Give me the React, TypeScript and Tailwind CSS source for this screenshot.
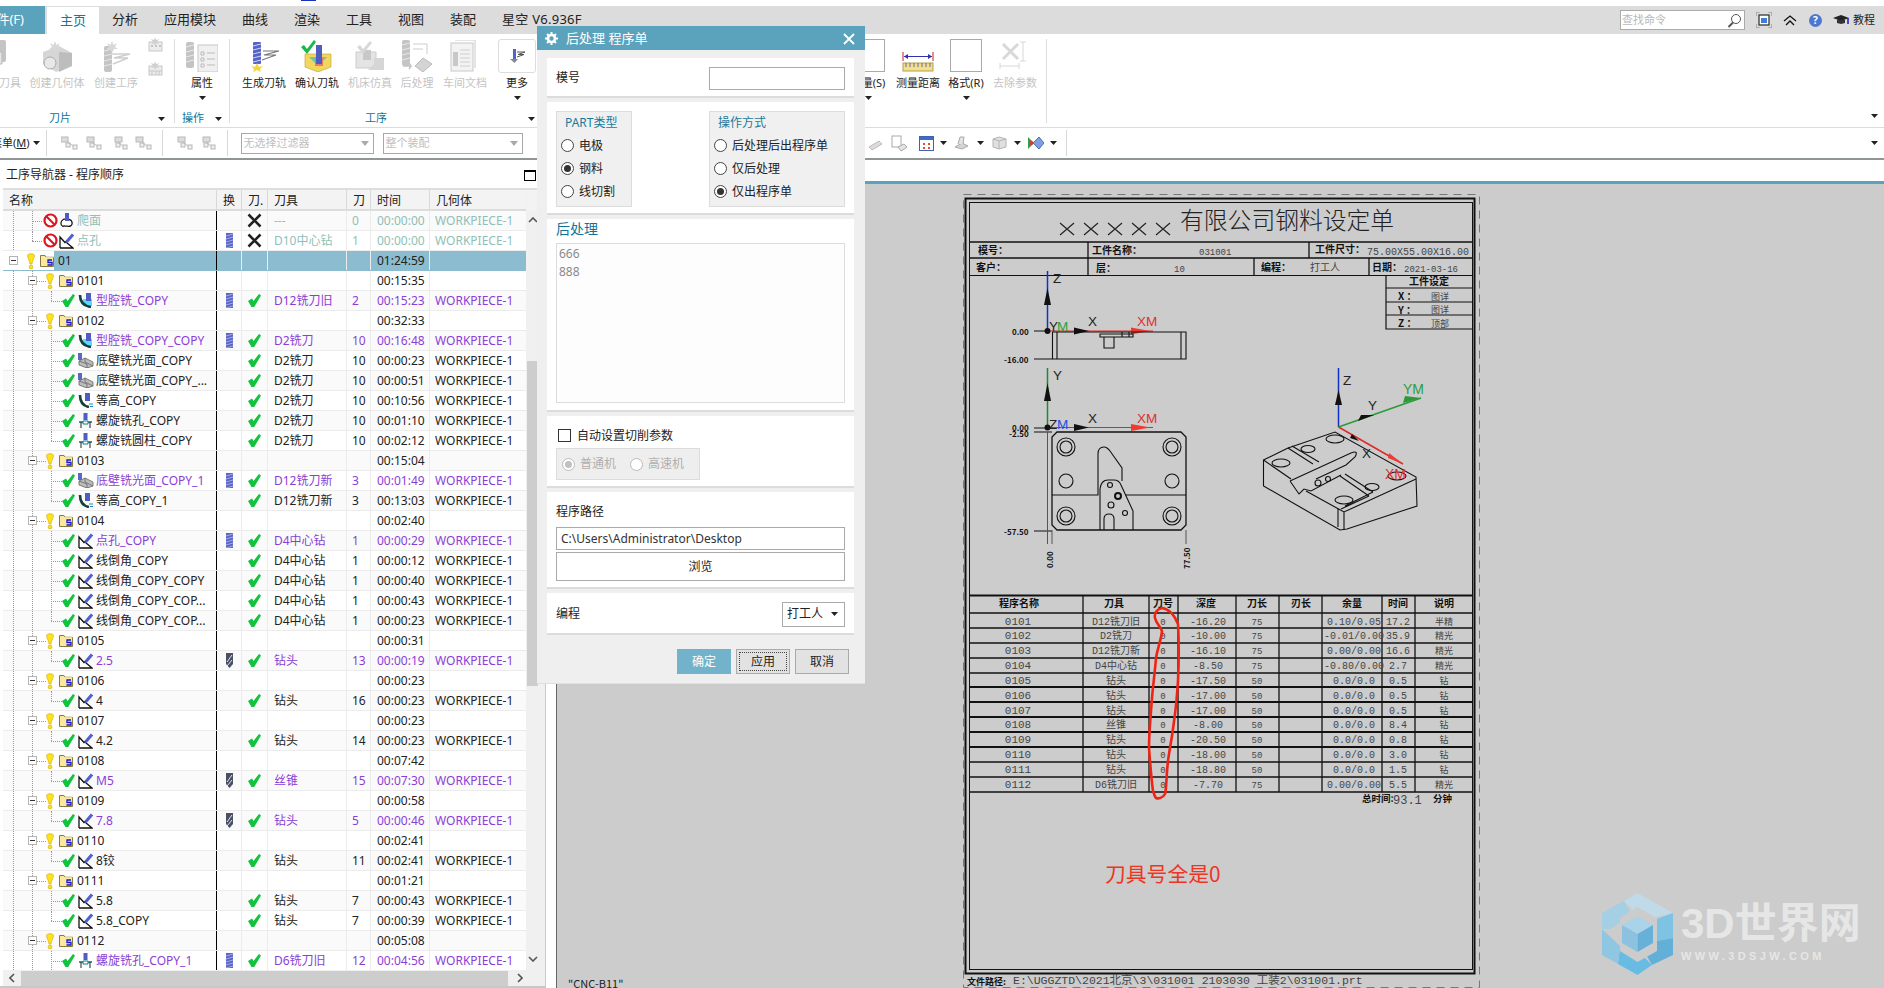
import React from "react";

// ---------- small tree icons ----------
const Bulb = () => (
  <svg width="8" height="16" viewBox="0 0 8 16" className="shrink-0">
    <path d="M.5 2.5 C.5 .2 7.500 .2 7.500 2.500 C7.500 5 5.200 8 5 11 H3 C2.800 8 .5 5 .5 2.500z" fill="#ffe21a" stroke="#c9a800" strokeWidth=".6" />
    <circle cx="4" cy="14" r="1.900" fill="#ffe21a" stroke="#c9a800" strokeWidth=".6" />
  </svg>
);

const Folder = () => (
  <svg width="14" height="13" viewBox="0 0 14 13" className="shrink-0">
    <path d="M.5 12.5V1.5H5L6 3H13.5V12.5z" fill="#fbe9a0" stroke="#8a7a3a" />
    <path d="M6 3H13.5" stroke="#fff" />
    <path d="M12 6H8V8.5H12V11H7.5" stroke="#1616d8" strokeWidth="1.3" fill="none" />
  </svg>
);

const Check = () => (
  <svg width="13" height="13" viewBox="0 0 13 13" className="shrink-0">
    <path d="M0 7 L4 4.500 L5.500 7 L11 0 L13 1.500 L6.200 13 L3.500 13z" fill="#11c43d" />
  </svg>
);

const NoSign = () => (
  <svg width="15" height="15" viewBox="0 0 15 15" className="shrink-0">
    <circle cx="7.5" cy="7.5" r="6" fill="#fff" stroke="#e0141e" strokeWidth="2.2" />
    <path d="M3.5 3.5L11.5 11.5" stroke="#e0141e" strokeWidth="2.2" />
  </svg>
);

const Cross = () => (
  <svg width="15" height="15" viewBox="0 0 15 15">
    <path d="M1.5 1.5L13.5 13.5M13.5 1.5L1.5 13.5" stroke="#222" strokeWidth="2.6" />
  </svg>
);

const OpPath = () => (
  <svg width="15" height="16" viewBox="0 0 15 16" className="shrink-0">
    <path d="M1 15V4L6 9.500L8.500 7.500M1 15H14L7.500 9.500" stroke="#111" strokeWidth="1.300" fill="#fff" />
    <path d="M7.500 9L14 1.500" stroke="#5060d0" strokeWidth="3" />
  </svg>
);

const OpCavity = () => (
  <svg width="15" height="15" viewBox="0 0 15 15" className="shrink-0">
    <rect x="5" y="6" width="9" height="7" fill="#52dcff" />
    <path d="M2 2C2 9 5 13 13 14" stroke="#13403f" strokeWidth="2.6" fill="none" />
    <rect x="8" y="0" width="5" height="8" fill="#4f5cc4" />
  </svg>
);

const OpFloor = () => (
  <svg width="16" height="15" viewBox="0 0 16 15" className="shrink-0">
    <path d="M1 8L7 5L15 9V13L9 15L1 12z" fill="#bdbdbd" stroke="#666" strokeWidth=".8" />
    <path d="M7 5V9L15 13M1 8L9 11V15" stroke="#666" strokeWidth=".8" fill="none" />
    <rect x="0" y="0" width="4" height="7" fill="#5a66c8" />
  </svg>
);

const OpContour = () => (
  <svg width="15" height="15" viewBox="0 0 15 15" className="shrink-0">
    <path d="M2 2C2 9 5 13 11 14" stroke="#12403f" strokeWidth="2.6" fill="none" />
    <rect x="7" y="0" width="5" height="8" fill="#4f5cc4" />
    <path d="M11 11H15M12 13.500H15" stroke="#1888c8" />
  </svg>
);

const OpHelix = () => (
  <svg width="15" height="15" viewBox="0 0 15 15" className="shrink-0">
    <rect x="5.500" y="0" width="4" height="7" fill="#4f5cc4" />
    <path d="M1 9H14" stroke="#0d7f88" strokeWidth="1.6" />
    <path d="M3 9V15M12 9V15" stroke="#222" />
    <path d="M5 8H10V11H5z" fill="#fff" stroke="#0d7f88" />
  </svg>
);

const OpFace = () => (
  <svg width="15" height="15" viewBox="0 0 15 15" className="shrink-0">
    <path d="M5 6C1 8 1 12 4 13.500C5 12 7 14 8 13C10 14 14 13 13 9C12 6 9 6 5 6z" fill="#fff" stroke="#111" strokeWidth="1.2" />
    <rect x="6" y="0" width="4" height="8" fill="#4f5cc4" />
  </svg>
);

const ToolMill = () => (
  <svg width="7" height="15" viewBox="0 0 7 15">
    <rect width="7" height="15" fill="#5964c6" />
    <path d="M0 3L7 1M0 6L7 4M0 9L7 7M0 12L7 10M0 15L7 13" stroke="#b9c0ee" strokeWidth=".8" />
  </svg>
);

const ToolDrill = () => (
  <svg width="7" height="15" viewBox="0 0 7 15">
    <path d="M0 0H7V11L3.500 15L0 11z" fill="#4a4f63" />
    <path d="M1 9L6 2M1 13L6 7" stroke="#dfe2ee" />
  </svg>
);

const opIcons = { path: OpPath, cavity: OpCavity, floor: OpFloor, contour: OpContour, helix: OpHelix, face: OpFace };
type OpKind = keyof typeof opIcons;

type Row = {
  lv: "top" | "root" | "grp" | "op";
  name: string;
  time: string;
  op?: OpKind;
  tool?: string;
  n?: string;
  purple?: boolean;
  icon?: "mill" | "drill";
  end?: boolean;
};

const op = (name: string, o: OpKind, tool: string, n: string, time: string, extra: Partial<Row> = {}): Row => ({
  lv: "op", name, op: o, tool, n, time, ...extra,
});
const grp = (name: string, time: string): Row => ({ lv: "grp", name, time });
const P = { purple: true, icon: "mill" as const };
const PD = { purple: true, icon: "drill" as const };

const rows: Row[] = [
  { lv: "top", name: "爬面", time: "00:00:00", op: "face", tool: "---", n: "0" },
  { lv: "top", name: "点孔", time: "00:00:00", op: "path", tool: "D10中心钻", n: "1", icon: "mill", end: true },
  { lv: "root", name: "01", time: "01:24:59" },
  grp("0101", "00:15:35"),
  op("型腔铣_COPY", "cavity", "D12铣刀旧", "2", "00:15:23", { ...P, end: true }),
  grp("0102", "00:32:33"),
  op("型腔铣_COPY_COPY", "cavity", "D2铣刀", "10", "00:16:48", P),
  op("底壁铣光面_COPY", "floor", "D2铣刀", "10", "00:00:23"),
  op("底壁铣光面_COPY_...", "floor", "D2铣刀", "10", "00:00:51"),
  op("等高_COPY", "contour", "D2铣刀", "10", "00:10:56"),
  op("螺旋铣孔_COPY", "helix", "D2铣刀", "10", "00:01:10"),
  op("螺旋铣圆柱_COPY", "helix", "D2铣刀", "10", "00:02:12", { end: true }),
  grp("0103", "00:15:04"),
  op("底壁铣光面_COPY_1", "floor", "D12铣刀新", "3", "00:01:49", P),
  op("等高_COPY_1", "contour", "D12铣刀新", "3", "00:13:03", { end: true }),
  grp("0104", "00:02:40"),
  op("点孔_COPY", "path", "D4中心钻", "1", "00:00:29", P),
  op("线倒角_COPY", "path", "D4中心钻", "1", "00:00:12"),
  op("线倒角_COPY_COPY", "path", "D4中心钻", "1", "00:00:40"),
  op("线倒角_COPY_COP...", "path", "D4中心钻", "1", "00:00:43"),
  op("线倒角_COPY_COP...", "path", "D4中心钻", "1", "00:00:23", { end: true }),
  grp("0105", "00:00:31"),
  op("2.5", "path", "钻头", "13", "00:00:19", { ...PD, end: true }),
  grp("0106", "00:00:23"),
  op("4", "path", "钻头", "16", "00:00:23", { end: true }),
  grp("0107", "00:00:23"),
  op("4.2", "path", "钻头", "14", "00:00:23", { end: true }),
  grp("0108", "00:07:42"),
  op("M5", "path", "丝锥", "15", "00:07:30", { ...PD, end: true }),
  grp("0109", "00:00:58"),
  op("7.8", "path", "钻头", "5", "00:00:46", { ...PD, end: true }),
  grp("0110", "00:02:41"),
  op("8铰", "path", "钻头", "11", "00:02:41", { end: true }),
  grp("0111", "00:01:21"),
  op("5.8", "path", "钻头", "7", "00:00:43"),
  op("5.8_COPY", "path", "钻头", "7", "00:00:39", { end: true }),
  grp("0112", "00:05:08"),
  op("螺旋铣孔_COPY_1", "helix", "D6铣刀旧", "12", "00:04:56", P),
];

const Minus = () => (
  <span className="shrink-0 w-[9px] h-[9px] border border-[#b4b4b4] bg-white flex items-center justify-center">
    <span className="w-[5px] h-px bg-[#333]" />
  </span>
);

function TreeName({ r }: { r: Row }) {
  const OpIcon = r.op ? opIcons[r.op] : null;
  const color = r.lv === "top" ? "text-[#8fbfb6]" : r.purple ? "text-[#8a3ed6]" : "text-[#222]";
  return (
    <div className="relative w-[214px] h-full flex items-center border-r border-black shrink-0">
      <span className="absolute left-[10px] top-0 h-full border-l border-dotted border-[#999]" />
      {r.lv !== "root" && (
        <span className={`absolute left-[29px] top-0 border-l border-dotted border-[#999] ${r.lv === "top" && r.end ? "h-[10px]" : "h-full"}`} />
      )}
      {r.lv === "op" && (
        <span className={`absolute left-[48px] top-0 border-l border-dotted border-[#999] ${r.end ? "h-[10px]" : "h-full"}`} />
      )}
      {r.lv === "top" && <span className="absolute left-[29px] top-[10px] w-[10px] border-t border-dotted border-[#999]" />}
      {r.lv === "op" && <span className="absolute left-[48px] top-[10px] w-[11px] border-t border-dotted border-[#999]" />}
      {r.lv === "grp" && <span className="absolute left-[34px] top-[10px] w-[9px] border-t border-dotted border-[#999]" />}
      {r.lv === "root" && (
        <div className="relative flex items-center h-full w-full">
          <div className="w-[51px] h-full bg-white shrink-0 flex items-center pl-[6px]">
            <Minus />
            <span className="ml-[9px]"><Bulb /></span>
            <span className="ml-[5px]"><Folder /></span>
          </div>
          <span className="pl-[4px] text-[#222]">{r.name}</span>
        </div>
      )}
      {r.lv === "grp" && (
        <div className="relative flex items-center h-full pl-[25px]">
          <Minus />
          <span className="ml-[9px]"><Bulb /></span>
          <span className="ml-[5px]"><Folder /></span>
          <span className="ml-[4px] text-[#222]">{r.name}</span>
        </div>
      )}
      {r.lv === "op" && OpIcon && (
        <div className="relative flex items-center h-full pl-[59px]">
          <Check />
          <span className="ml-[3px] w-[15px] flex"><OpIcon /></span>
          <span className={`ml-[3px] whitespace-nowrap ${color}`}>{r.name}</span>
        </div>
      )}
      {r.lv === "top" && OpIcon && (
        <div className="relative flex items-center h-full pl-[40px]">
          <NoSign />
          <span className="ml-[1px] w-[15px] flex"><OpIcon /></span>
          <span className={`ml-[3px] ${color}`}>{r.name}</span>
        </div>
      )}
    </div>
  );
}

function TreeRow({ r, i }: { r: Row; i: number }) {
  const sel = r.lv === "root";
  const color = r.lv === "top" ? "text-[#8fbfb6]" : r.purple ? "text-[#8a3ed6]" : "text-[#222]";
  const bg = sel ? "bg-[#8bbccf]" : i % 2 === 0 ? "bg-[#fafafa]" : "bg-white";
  const line = sel ? "border-[#8bbccf]" : "border-[#ececec]";
  return (
    <div className={`flex h-[20px] border-b ${line} ${bg} text-[12px] leading-[19px]`}>
      <TreeName r={r} />
      <div className="w-[25px] shrink-0 border-r border-[#ececec] flex items-center justify-center">
        {r.icon === "mill" && <ToolMill />}
        {r.icon === "drill" && <ToolDrill />}
      </div>
      <div className="w-[26px] shrink-0 border-r border-[#ececec] flex items-center justify-center">
        {r.lv === "top" && <Cross />}
        {r.lv === "op" && <Check />}
      </div>
      <div className={`w-[79px] shrink-0 border-r border-[#ececec] pl-[6px] whitespace-nowrap ${color}`}>{r.tool}</div>
      <div className={`w-[24px] shrink-0 border-r border-[#ececec] pl-[5px] ${color}`}>{r.n}</div>
      <div className={`w-[59px] shrink-0 border-r border-[#ececec] pl-[6px] ${color}`}>{r.time}</div>
      <div className={`flex-1 pl-[5px] whitespace-nowrap ${color}`}>{r.tool || r.n ? "WORKPIECE-1" : ""}</div>
    </div>
  );
}

function HeadCell({ w, label }: { w: string; label: string }) {
  return <div className={`${w} shrink-0 pl-[6px] border-r border-[#d8d8d8]`}>{label}</div>;
}

function Navigator() {
  return (
    <div className="w-[546px] h-full border-r border-[#c8c8c8] border-b-2 border-b-[#c8c8c8] flex flex-col bg-white overflow-hidden">
      <div className="h-[28px] flex items-center pt-[2px] pl-[6px] pr-[9px] text-[12px] text-[#222] shrink-0">
        <span>工序导航器 - 程序顺序</span>
        <span className="ml-auto w-[12px] h-[11px] border border-black border-t-2" />
      </div>
      <div className="flex-1 min-h-0 flex border-t-2 border-[#dedede] ml-[3px]">
        <div className="w-[524px] flex flex-col overflow-hidden">
          <div className="h-[21px] shrink-0 flex bg-[#f3f3f3] border-b-2 border-[#dcdcdc] text-[12px] leading-[21px] text-[#222]">
            <HeadCell w="w-[214px]" label="名称" />
            <div className="w-[25px] shrink-0 pl-[6px] border-r border-[#d8d8d8]">换</div>
            <div className="w-[26px] shrink-0 pl-[6px] border-r border-[#d8d8d8]">刀.</div>
            <HeadCell w="w-[79px]" label="刀具" />
            <HeadCell w="w-[24px]" label="刀" />
            <HeadCell w="w-[59px]" label="时间" />
            <div className="flex-1 pl-[6px]">几何体</div>
          </div>
          <div className="flex-1 min-h-0 overflow-hidden">
            {rows.map((r, i) => (
              <TreeRow key={i} r={r} i={i} />
            ))}
          </div>
        </div>
        <div className="flex-1 flex flex-col bg-[#f0f0f0] pl-[1px] pr-[7px]">
          <div className="h-[21px] bg-[#f3f3f3] shrink-0" />
          <div className="h-[150px] shrink-0 pt-[6px] text-[#555]">
            <svg width="10" height="6" viewBox="0 0 10 6" className="ml-[1px]"><path d="M1 5L5 1L9 5" stroke="#555" strokeWidth="1.6" fill="none" /></svg>
          </div>
          <div className="h-[325px] shrink-0 bg-[#cdcdcd]" />
          <div className="flex-1" />
          <div className="h-[18px] shrink-0 pt-[4px]">
            <svg width="10" height="6" viewBox="0 0 10 6" className="ml-[1px]"><path d="M1 1L5 5L9 1" stroke="#555" strokeWidth="1.6" fill="none" /></svg>
          </div>
        </div>
      </div>
      <div className="h-[16px] shrink-0 bg-[#f0f0f0] flex items-center ml-[3px] pl-[6px]">
        <svg width="6" height="10" viewBox="0 0 6 10"><path d="M5 1L1 5L5 9" stroke="#555" strokeWidth="1.6" fill="none" /></svg>
        <div className="ml-[6px] w-[487px] h-[15px] bg-[#cdcdcd]" />
        <svg width="6" height="10" viewBox="0 0 6 10" className="ml-[9px]"><path d="M1 1L5 5L1 9" stroke="#555" strokeWidth="1.6" fill="none" /></svg>
      </div>
    </div>
  );
}

// ---------- ribbon ----------
const Tri = () => (
  <svg width="7" height="4" viewBox="0 0 7 4" className="shrink-0"><path d="M0 0H7L3.500 4z" fill="#222" /></svg>
);

const Burst = ({ x, y }: { x: number; y: number }) => (
  <path transform={`translate(${x} ${y})`} d="M0 -6L1.500 -2L5 -4L3 0L6 2L2 2L0 6L-2 2L-6 2L-3 0L-5 -4L-1.500 -2z" fill="#d8d8d8" />
);

const GrayTool = ({ x = 0, y = 0 }: { x?: number; y?: number }) => (
  <g transform={`translate(${x} ${y})`}>
    <rect width="8" height="26" rx="2" fill="#c4c4c4" />
    <path d="M0 5L8 3M0 10L8 8M0 15L8 13M0 20L8 18" stroke="#e8e8e8" />
  </g>
);

const IcoCube = () => (
  <svg width="32" height="32" viewBox="0 0 32 32">
    <path d="M2 12L18 6L31 13V26L15 32L2 24z" fill="#d6d6d6" />
    <path d="M18 12L31 13V26L18 32z" fill="#bdbdbd" />
    <circle cx="9" cy="23" r="6" fill="#e8e8e8" stroke="#aaa" />
    <Burst x={14} y={7} />
  </svg>
);
const IcoCreateOp = () => (
  <svg width="32" height="32" viewBox="0 0 32 32">
    <GrayTool x={4} y={6} />
    <path d="M12 14H30L14 18H28L13 24" stroke="#cfcfcf" strokeWidth="1.500" fill="none" />
    <Burst x={12} y={7} />
  </svg>
);
const IcoAttr = () => (
  <svg width="32" height="32" viewBox="0 0 32 32">
    <GrayTool x={0} y={2} />
    <rect x="12" y="5" width="20" height="27" fill="#f0f0f0" stroke="#c8c8c8" />
    <path d="M15 12h3v3h-3zM15 18h3v3h-3zM15 24h3v3h-3zM21 13H29M21 19H29M21 25H29" stroke="#bbb" fill="none" />
  </svg>
);
const IcoGen = () => (
  <svg width="32" height="32" viewBox="0 0 32 32">
    <rect x="5" y="2" width="8" height="22" rx="1" fill="#5563c8" />
    <path d="M5 6L13 4M5 10L13 8M5 14L13 12M5 18L13 16M5 22L13 20" stroke="#cfd4f3" />
    <path d="M15 11H31L16 15H28L14 20" stroke="#777" strokeWidth="1.200" fill="none" />
    <path d="M9 23L11 27L15 26L12 29L13 32L9 30L5 32L6 29L3 26L7 27z" fill="#f2d43c" />
  </svg>
);
const IcoVerify = () => (
  <svg width="32" height="32" viewBox="0 0 32 32">
    <path d="M4 14L18 14L30 14V27L17 32L4 27z" fill="#f2d660" stroke="#c0a030" strokeWidth=".6" />
    <path d="M8 17L17 26L26 17z" fill="#6cc6a8" />
    <path d="M14 18h8v8h-8z" fill="#e08060" />
    <rect x="15" y="5" width="6" height="19" fill="#4f5cc4" />
    <path d="M0 7L3 5L6 9L13 0L15 2L6 14z" fill="#19b84a" />
  </svg>
);
const IcoSim = () => (
  <svg width="32" height="32" viewBox="0 0 32 32">
    <path d="M2 12H22V28H2z" fill="#e4e4e4" stroke="#ccc" />
    <path d="M20 18L30 18V30H14L20 24z" fill="#d6d6d6" />
    <rect x="9" y="10" width="8" height="10" fill="#c8c8c8" />
    <path d="M3 7L6 5L9 9L16 1L18 3L9 14z" fill="#d8d8d8" />
  </svg>
);
const IcoPost = () => (
  <svg width="32" height="32" viewBox="0 0 32 32">
    <GrayTool x={1} y={0} />
    <path d="M12 4H26V14M12 9H22" stroke="#ccc" fill="none" />
    <path d="M2 26H10L8 23M10 26L8 29" stroke="#c4c4c4" strokeWidth="1.500" fill="none" />
    <path d="M14 26L22 18L31 24L22 32z" fill="#d4d4d4" stroke="#bbb" />
  </svg>
);
const IcoDoc = () => (
  <svg width="32" height="32" viewBox="0 0 32 32">
    <path d="M6 0H26V28" fill="none" stroke="#ccc" />
    <rect x="2" y="3" width="22" height="28" fill="#f3f3f3" stroke="#c8c8c8" />
    <rect x="4" y="12" width="5" height="14" fill="#c8c8c8" />
    <path d="M11 10H21M11 14H21M11 18H21M11 22H21M11 26H21" stroke="#cfcfcf" />
  </svg>
);
const IcoMore = () => (
  <svg width="16" height="14" viewBox="0 0 16 14">
    <rect x="4" y="0" width="3" height="10" fill="#5563c8" />
    <path d="M1 10L5.500 14L9 10z" fill="#888" />
    <path d="M8 3H16L9 5.500H15L8 8" stroke="#555" fill="none" />
  </svg>
);
const IcoMeasure = () => (
  <svg width="32" height="21" viewBox="0 0 32 21">
    <path d="M1 1V10M31 1V10" stroke="#c02020" />
    <path d="M2 5.500H30" stroke="#3030b0" />
    <path d="M2 5.500L6 3V8zM30 5.500L26 3V8z" fill="#3030b0" />
    <rect x="1" y="12" width="30" height="8" fill="#f2e08a" stroke="#b0a050" />
    <path d="M4 12V16M8 12V16M12 12V16M16 12V16M20 12V16M24 12V16M28 12V16" stroke="#7060a0" />
  </svg>
);
const IcoRemove = () => (
  <svg width="32" height="30" viewBox="0 0 32 30">
    <path d="M4 3L19 18M19 3L4 18" stroke="#d8d8d8" strokeWidth="3" />
    <path d="M21 1H27M24 1V20M21 20H27M1 25H20M1 22V28M20 22V28" stroke="#d8d8d8" />
  </svg>
);
const IcoGray1 = () => (
  <svg width="32" height="32" viewBox="0 0 32 32">
    <rect x="0" y="0" width="12" height="22" rx="2" fill="#c4c4c4" />
    <path d="M-4 12H8V24H-4z" fill="#e4e4e4" stroke="#bbb" />
    <circle cx="2" cy="18" r="2" fill="#999" />
  </svg>
);
const IcoSmall = ({ top }: { top?: boolean }) => (
  <svg width="15" height="15" viewBox="0 0 15 15">
    <rect x="1" y="5" width="13" height="9" fill="#ececec" stroke="#c8c8c8" />
    {top ? <path d="M3 8h2v2H3zM7 8h2v2H7zM11 8h2v2h-2z" fill="#c4c4c4" /> : <path d="M1 10H14M4 10V14M8 10V14M11 10V14" stroke="#c8c8c8" />}
    <path d="M7 0L8 3L11 2L9 5L11 7L8 6.500L7 9L6 6.500L3 7L5 5L3 2L6 3z" fill="#d0d0d0" />
  </svg>
);

function RibbonBtn({ w, label, dim, arrow, children }: { w: string; label: string; dim?: boolean; arrow?: boolean; children: React.ReactNode }) {
  return (
    <div className={`${w} shrink-0 flex flex-col items-center pt-[5px]`}>
      <div className="h-[33px] flex items-center justify-center">{children}</div>
      <div className={`mt-[3px] h-[16px] leading-[16px] text-[11px] whitespace-nowrap ${dim ? "text-[#c4c4c4]" : "text-[#222]"}`}>{label}</div>
      {arrow && <div className="mt-[5px] flex"><Tri /></div>}
    </div>
  );
}

const GroupLabel = ({ pl, label, gap }: { pl: string; label: string; gap: string }) => (
  <div className={`h-[17px] flex items-center ${pl} text-[11px] text-[#0f7396]`}>
    <span>{label}</span>
    <span className={gap}><Tri /></span>
  </div>
);

const RibbonSep = () => <div className="w-px h-[84px] mt-[5px] bg-[#dcdcdc] shrink-0" />;

function Ribbon() {
  return (
    <div className="h-[94px] border-b border-[#dcdcdc] flex overflow-hidden relative bg-white">
      <div className="w-[174px] shrink-0 flex flex-col">
        <div className="h-[77px] flex ml-[-10px]">
          <RibbonBtn w="w-[40px]" label="刀具" dim><IcoGray1 /></RibbonBtn>
          <RibbonBtn w="w-[54px]" label="创建几何体" dim><IcoCube /></RibbonBtn>
          <RibbonBtn w="w-[64px]" label="创建工序" dim><IcoCreateOp /></RibbonBtn>
          <div className="w-[14px] shrink-0 flex flex-col gap-[9px] pt-[3px] items-center">
            <IcoSmall top />
            <IcoSmall />
          </div>
        </div>
        <GroupLabel pl="pl-[49px]" label="刀片" gap="ml-[87px] flex" />
      </div>
      <RibbonSep />
      <div className="w-[54px] shrink-0 flex flex-col">
        <div className="h-[77px] flex">
          <RibbonBtn w="w-[54px]" label="属性" arrow><IcoAttr /></RibbonBtn>
        </div>
        <GroupLabel pl="pl-[7px]" label="操作" gap="ml-[11px] flex" />
      </div>
      <RibbonSep />
      <div className="w-[614px] shrink-0 flex flex-col">
        <div className="h-[77px] flex pl-[8px]">
          <RibbonBtn w="w-[52px]" label="生成刀轨"><IcoGen /></RibbonBtn>
          <RibbonBtn w="w-[54px]" label="确认刀轨"><IcoVerify /></RibbonBtn>
          <RibbonBtn w="w-[52px]" label="机床仿真" dim><IcoSim /></RibbonBtn>
          <RibbonBtn w="w-[42px]" label="后处理" dim><IcoPost /></RibbonBtn>
          <RibbonBtn w="w-[54px]" label="车间文档" dim><IcoDoc /></RibbonBtn>
          <RibbonBtn w="w-[50px]" label="更多" arrow>
            <div className="w-[38px] h-[34px] border border-[#dcdcdc] rounded-[3px] flex items-center justify-center"><IcoMore /></div>
          </RibbonBtn>
        </div>
        <GroupLabel pl="pl-[135px]" label="工序" gap="ml-[141px] flex" />
      </div>
      <div className="flex h-[77px]">
        <RibbonBtn w="w-[48px]" label="测量(S)" arrow><div className="w-[34px] h-[33px] border border-[#aaa]" /></RibbonBtn>
        <RibbonBtn w="w-[52px]" label="测量距离"><div className="mt-[12px] flex"><IcoMeasure /></div></RibbonBtn>
        <RibbonBtn w="w-[44px]" label="格式(R)" arrow><div className="w-[32px] h-[33px] border border-[#aaa]" /></RibbonBtn>
        <RibbonBtn w="w-[54px]" label="去除参数" dim><IcoRemove /></RibbonBtn>
      </div>
      <div className="ml-[4px]"><RibbonSep /></div>
      <div className="ml-auto mt-[80px] mr-[6px] flex"><Tri /></div>
    </div>
  );
}

// ---------- toolbar ----------
const ToolIco = ({ variant }: { variant: number }) => (
  <svg width="17" height="15" viewBox="0 0 17 15">
    <rect x={variant * 2 % 5} y="1" width="7" height="5" fill="#dcdcdc" stroke="#b8b8b8" />
    <rect x="5" y="7" width="4" height="4" fill="#eee" stroke="#b8b8b8" />
    <rect x="12" y="9" width="4" height="4" fill="#eee" stroke="#b8b8b8" />
    <path d="M7 6L12 10" stroke="#b8b8b8" />
  </svg>
);

const TbSep = ({ className = "" }: { className?: string }) => <div className={`w-px h-[26px] bg-[#d8d8d8] shrink-0 ${className}`} />;

const TbSelect = ({ w, label, ml }: { w: string; label: string; ml: string }) => (
  <div className={`${w} ${ml} h-[21px] border border-[#a8a8a8] flex items-center px-[2px] text-[11px] text-[#c0c0c0] shrink-0`}>
    <span>{label}</span>
    <svg width="8" height="5" viewBox="0 0 8 5" className="ml-auto mr-[2px]"><path d="M0 0H8L4 5z" fill="#aaa" /></svg>
  </div>
);

function Toolbar() {
  return (
    <div className="h-[32px] border-b-2 border-[#909596] flex items-center overflow-hidden bg-white text-[11px] text-[#222]">
      <span className="ml-[-9px] whitespace-nowrap">菜单(<span className="underline">M</span>)</span>
      <span className="ml-[3px] flex"><Tri /></span>
      <TbSep className="ml-[6px]" />
      <span className="ml-[14px] flex"><ToolIco variant={0} /></span>
      <span className="ml-[7px] flex"><ToolIco variant={1} /></span>
      <span className="ml-[9px] flex"><ToolIco variant={2} /></span>
      <span className="ml-[7px] flex"><ToolIco variant={3} /></span>
      <TbSep className="ml-[10px]" />
      <span className="ml-[13px] flex"><ToolIco variant={1} /></span>
      <span className="ml-[6px] flex"><ToolIco variant={2} /></span>
      <TbSep className="ml-[11px]" />
      <TbSelect w="w-[133px]" ml="ml-[13px]" label="无选择过滤器" />
      <TbSelect w="w-[140px]" ml="ml-[9px]" label="整个装配" />
      <div className="w-[345px] shrink-0" />
      <svg width="16" height="15" viewBox="0 0 16 15" className="shrink-0"><path d="M1 11L11 5L14 8L4 14z" fill="#dcdcdc" stroke="#bbb" /></svg>
      <svg width="17" height="17" viewBox="0 0 17 17" className="ml-[7px] shrink-0"><rect x="1" y="1" width="9" height="11" fill="#fff" stroke="#aaa" /><path d="M7 12L13 9L16 12L10 16z" fill="#e4e4e4" stroke="#aaa" /></svg>
      <svg width="15" height="15" viewBox="0 0 15 15" className="ml-[11px] shrink-0"><rect x=".5" y=".5" width="14" height="14" fill="#fff" stroke="#4060b0" /><rect x="1" y="1" width="13" height="3" fill="#3c6cc8" /><path d="M4 7h2v2H4zM9 7h2v2H9zM4 11h2v2H4zM9 11h2v2H9z" fill="#e05030" /></svg>
      <span className="ml-[6px] flex"><Tri /></span>
      <svg width="15" height="14" viewBox="0 0 15 14" className="ml-[7px] shrink-0"><path d="M1 11L8 7L14 10L8 13z" fill="#d4d4d4" stroke="#aaa" /><path d="M4 8L6 1H10L9 8" fill="#e4e4e4" stroke="#aaa" /></svg>
      <span className="ml-[8px] flex"><Tri /></span>
      <svg width="15" height="14" viewBox="0 0 15 14" className="ml-[8px] shrink-0"><path d="M1 3L7 1L14 3V11L7 13L1 11z" fill="#e0e0e0" stroke="#b4b4b4" /><path d="M1 3L7 5L14 3M7 5V13" stroke="#b4b4b4" fill="none" /></svg>
      <span className="ml-[7px] flex"><Tri /></span>
      <svg width="16" height="14" viewBox="0 0 16 14" className="ml-[7px] shrink-0"><path d="M0 1L6 7L0 13z" fill="#2ca04a" /><path d="M2 4L7 7L2 10z" fill="#d04030" /><path d="M5 7L11 1L16 7L11 13z" fill="#7aa0e0" stroke="#5070b0" /></svg>
      <span className="ml-[6px] flex"><Tri /></span>
      <TbSep className="ml-[9px]" />
      <span className="ml-auto mr-[6px] flex"><Tri /></span>
    </div>
  );
}

// ---------- menu bar ----------
function MenuBar() {
  const items = ["分析", "应用模块", "曲线", "渲染", "工具", "视图", "装配"];
  return (
    <div className="h-[28px] bg-[#dcdcdc] flex text-[13px] text-[#222] shrink-0">
      <div className="w-[45px] bg-[#5ba3bd] text-white flex items-center justify-end pr-[21px] overflow-hidden whitespace-nowrap">文件(F)</div>
      <div className="ml-[2px] mt-[1px] w-[52px] bg-white text-[#0b7a9c] flex items-center justify-center">主页</div>
      {items.map((t) => (
        <div key={t} className="px-[13px] flex items-center">{t}</div>
      ))}
      <div className="pl-[13px] flex items-center tracking-[0.25px]">星空 V6.936F</div>
      <div className="ml-auto flex items-center pr-[9px]">
        <div className="w-[125px] h-[20px] bg-white border border-[#aaa] flex items-center pl-[1px] text-[11px] text-[#b8b8b8]">
          <span>查找命令</span>
          <svg width="15" height="15" viewBox="0 0 15 15" className="ml-auto mr-[2px]"><circle cx="9" cy="6" r="4.500" fill="#fff" stroke="#555" /><path d="M6 9.500L1.500 14" stroke="#555" strokeWidth="2" /></svg>
        </div>
        <svg width="16" height="16" viewBox="0 0 16 16" className="ml-[11px]">
          <path d="M0 4V0H4M12 0H16V4M16 12V16H12M4 16H0V12" stroke="#888" fill="none" />
          <rect x="3" y="3" width="10" height="10" fill="#fff" stroke="#444" strokeWidth="1.400" />
          <rect x="5" y="6" width="6" height="5" fill="#3f7fd8" />
        </svg>
        <svg width="14" height="11" viewBox="0 0 14 11" className="ml-[11px]"><path d="M1 6L7 1L13 6M3 10L7 6L11 10" stroke="#111" strokeWidth="1.300" fill="none" /></svg>
        <span className="ml-[12px] w-[13px] h-[13px] rounded-full bg-[#4d78d0] text-white text-[10px] font-bold flex items-center justify-center">?</span>
        <svg width="16" height="12" viewBox="0 0 16 12" className="ml-[11px]"><path d="M0 4L8 1L16 4L8 7z" fill="#222" /><path d="M4 6V9L8 10L12 9V6" fill="#333" /><path d="M15 4V10" stroke="#1818c8" strokeWidth="1.500" /></svg>
        <span className="ml-[4px] text-[11px]">教程</span>
      </div>
    </div>
  );
}

// ---------- dialog ----------
const Radio = ({ on, dim }: { on?: boolean; dim?: boolean }) => (
  <span className={`shrink-0 w-[13px] h-[13px] rounded-full border bg-white flex items-center justify-center ${dim ? "border-[#bbb]" : "border-[#444]"}`}>
    {on && <span className={`w-[7px] h-[7px] rounded-full ${dim ? "bg-[#c0c0c0]" : "bg-[#333]"}`} />}
  </span>
);

const RadioRow = ({ label, on }: { label: string; on?: boolean }) => (
  <div className="h-[23px] flex items-center gap-[5px] pl-[4px] text-[12px] text-[#222]">
    <Radio on={on} />
    <span>{label}</span>
  </div>
);

const Card = ({ className, children }: { className: string; children: React.ReactNode }) => (
  <div className={`bg-white border-b-2 border-[#dcdcdc] px-[9px] ${className}`}>{children}</div>
);

function Dialog() {
  return (
    <div className="absolute left-[537px] top-[26px] w-[328px] h-[658px] bg-[#efefef] flex flex-col text-[12px] text-[#222] border-b border-[#e0e0e0]">
      <div className="h-[24px] bg-[#5ba3bd] flex items-center pt-[1px] pl-[8px] pr-[10px] text-white text-[13px] shrink-0">
        <svg width="13" height="13" viewBox="0 0 13 13">
          <circle cx="6.500" cy="6.500" r="3.500" fill="none" stroke="#fff" strokeWidth="2.600" />
          <path d="M6.500 0V2M6.500 11V13M0 6.500H2M11 6.500H13M2 2L3.500 3.500M9.500 9.500L11 11M2 11L3.500 9.500M9.500 3.500L11 2" stroke="#fff" strokeWidth="2" />
        </svg>
        <span className="ml-[8px]">后处理 程序单</span>
        <svg width="12" height="12" viewBox="0 0 12 12" className="ml-auto"><path d="M1 1L11 11M11 1L1 11" stroke="#fff" strokeWidth="1.800" /></svg>
      </div>
      <div className="pl-[10px] pr-[11px] pt-[8px] flex flex-col gap-[4px]">
        <Card className="h-[40px] pt-[2px] flex items-center justify-between">
          <span>模号</span>
          <div className="w-[136px] h-[23px] border border-[#aaa] bg-white" />
        </Card>
        <Card className="h-[113px] pt-[9px] flex justify-between">
          <div className="w-[76px] h-[96px] bg-[#f0f0f0] border border-[#dcdcdc]">
            <div className="h-[22px] leading-[22px] pl-[8px] text-[#1a7a9c]">PART类型</div>
            <RadioRow label="电极" />
            <RadioRow label="钢料" on />
            <RadioRow label="线切割" />
          </div>
          <div className="w-[136px] h-[96px] bg-[#f0f0f0] border border-[#dcdcdc]">
            <div className="h-[22px] leading-[22px] pl-[8px] text-[#1a7a9c]">操作方式</div>
            <RadioRow label="后处理后出程序单" />
            <RadioRow label="仅后处理" />
            <RadioRow label="仅出程序单" on />
          </div>
        </Card>
        <Card className="h-[193px]">
          <div className="h-[24px] leading-[20px] text-[14px] text-[#0f7396]">后处理</div>
          <div className="h-[160px] border border-[#dcdcdc] bg-[#fdfdfd] px-[2px] pt-[1px] text-[12px] leading-[18px] text-[#8a8a8a]">
            <div>666</div>
            <div>888</div>
          </div>
        </Card>
        <Card className="h-[72px] pt-[13px]">
          <div className="flex items-center gap-[6px] pl-[2px] h-[13px]">
            <span className="w-[13px] h-[13px] border border-[#333] bg-white" />
            <span>自动设置切削参数</span>
          </div>
          <div className="mt-[6px] w-[144px] h-[32px] bg-[#eeeeee] border border-[#dcdcdc] flex items-center pl-[5px] text-[#b0b0b0]">
            <Radio on dim />
            <span className="ml-[5px]">普通机</span>
            <span className="ml-[14px] flex"><Radio dim /></span>
            <span className="ml-[5px]">高速机</span>
          </div>
        </Card>
        <Card className="h-[97px] pt-[11px]">
          <div className="h-[17px] leading-[17px]">程序路径</div>
          <div className="mt-[7px] h-[23px] border border-[#aaa] bg-white pl-[4px] leading-[21px] text-[#333]">C:\Users\Administrator\Desktop</div>
          <div className="mt-[2px] h-[29px] border border-[#aaa] bg-white flex items-center justify-center">浏览</div>
        </Card>
        <Card className="h-[42px] pt-[2px] flex items-center justify-between">
          <span>编程</span>
          <div className="w-[63px] h-[25px] border border-[#aaa] bg-white flex items-center pl-[4px] text-[#222]">
            <span>打工人</span>
            <svg width="7" height="4" viewBox="0 0 7 4" className="ml-auto mr-[6px]"><path d="M0 0H7L3.500 4z" fill="#222" /></svg>
          </div>
        </Card>
        <div className="mt-[10px] pr-[5px] flex justify-end gap-[5px]">
          <div className="w-[54px] h-[25px] bg-[#72b3cb] text-white flex items-center justify-center">确定</div>
          <div className="w-[54px] h-[25px] bg-[#e2e2e2] border border-[#aaa] p-[2px]">
            <div className="h-full border border-dotted border-[#444] flex items-center justify-center">应用</div>
          </div>
          <div className="w-[54px] h-[25px] bg-[#e2e2e2] border border-[#aaa] flex items-center justify-center">取消</div>
        </div>
      </div>
    </div>
  );
}

// ---------- drawing sheet ----------
const sheetRows = [
  ["0101", "D12铣刀旧", "-16.20", "75", "0.10/0.05", "17.2", "半精"],
  ["0102", "D2铣刀", "-10.00", "75", "-0.01/0.00", "35.9", "精光"],
  ["0103", "D12铣刀新", "-16.10", "75", "0.00/0.00", "16.6", "精光"],
  ["0104", "D4中心钻", "-8.50", "75", "-0.80/0.00", "2.7", "精光"],
  ["0105", "钻头", "-17.50", "50", "0.0/0.0", "0.5", "钻"],
  ["0106", "钻头", "-17.00", "50", "0.0/0.0", "0.5", "钻"],
  ["0107", "钻头", "-17.00", "50", "0.0/0.0", "0.5", "钻"],
  ["0108", "丝锥", "-8.00", "50", "0.0/0.0", "8.4", "钻"],
  ["0109", "钻头", "-20.50", "50", "0.0/0.0", "0.8", "钻"],
  ["0110", "钻头", "-18.00", "50", "0.0/0.0", "3.0", "钻"],
  ["0111", "钻头", "-18.80", "50", "0.0/0.0", "1.5", "钻"],
  ["0112", "D6铣刀旧", "-7.70", "75", "0.00/0.00", "5.5", "精光"],
];
const sheetHead: [string, number][] = [
  ["程序名称", 1018], ["刀具", 1113], ["刀号", 1162], ["深度", 1205], ["刀长", 1256], ["刃长", 1300], ["余量", 1351], ["时间", 1397], ["说明", 1443],
];
const sheetCols = [1082, 1148, 1177, 1235, 1278, 1321, 1381, 1414];
const rowLines = [627, 642, 657, 672, 686, 701, 716, 731, 746, 761, 776, 791];

const Arrow = ({ d, fill = "#111" }: { d: string; fill?: string }) => <path d={d} fill={fill} />;

const Bold = ({ x, y, size = 10, anchor, children }: { x: number; y: number; size?: number; anchor?: "middle"; children: React.ReactNode }) => (
  <text x={x} y={y} fontSize={size} fontWeight={700} textAnchor={anchor} fill="#111">{children}</text>
);

const Mono = ({ x, y, size = 10, anchor, children }: { x: number; y: number; size?: number; anchor?: "middle"; children: React.ReactNode }) => (
  <text x={x} y={y} fontSize={size} textAnchor={anchor} fill="#444" fontFamily="'Liberation Mono','Noto Sans CJK SC',monospace">{children}</text>
);

const Label = ({ x, y, fill = "#222", size = 13.500, children }: { x: number; y: number; fill?: string; size?: number; children: React.ReactNode }) => (
  <text x={x} y={y} fontSize={size} fill={fill} fontFamily="'Liberation Sans',sans-serif">{children}</text>
);

function Sheet() {
  return (
    <svg width="1328" height="805" viewBox="556 183 1328 805" className="block [font-family:'Noto_Sans_CJK_SC',sans-serif]">
      <rect x="962.500" y="193.500" width="516" height="793" fill="none" stroke="#777" strokeDasharray="8 6" />
      <rect x="964.500" y="197.500" width="509" height="775" fill="none" stroke="#111" strokeWidth="2" />
      <rect x="968.500" y="201.500" width="503" height="767" fill="none" stroke="#111" />
      {/* title */}
      <g stroke="#222" strokeWidth="1.200">
        {[1066, 1090, 1114, 1138, 1162].map((x) => (
          <path key={x} d={`M${x - 7} 222L${x + 7} 234M${x + 7} 222L${x - 7} 234`} />
        ))}
      </g>
      <text x="1179" y="228" fontSize="23.800" fill="#222" fontWeight={300}>有限公司钢料设定单</text>
      {/* header grid */}
      <path d="M968 241H1471M968 257H1471" stroke="#111" strokeWidth="1.500" />
      <path d="M968 274.500H1471" stroke="#111" />
      <path d="M1087 241V274M1308 241V257M1253 257V274M1368 257V274" stroke="#111" strokeWidth="1.300" />
      <Bold x={977} y={253}>模号：</Bold>
      <Bold x={1091} y={253}>工件名称：</Bold>
      <Mono x={1198} y={254} size={9}>031001</Mono>
      <Bold x={1314} y={252}>工件尺寸：</Bold>
      <Mono x={1366} y={254}>75.00X55.00X16.00</Mono>
      <Bold x={975} y={270}>客户：</Bold>
      <Bold x={1095} y={271}>层：</Bold>
      <Mono x={1173} y={271} size={9}>10</Mono>
      <Bold x={1260} y={270}>编程：</Bold>
      <Mono x={1309} y={270} size={10}>打工人</Mono>
      <Bold x={1371} y={270}>日期：</Bold>
      <Mono x={1403} y={271} size={9}>2021-03-16</Mono>
      {/* work setting */}
      <path d="M1385 274V328H1471M1385 287H1471M1385 301H1471M1385 314H1471" fill="none" stroke="#111" strokeWidth="1.200" />
      <Bold x={1428} y={284} anchor="middle">工件设定</Bold>
      <Bold x={1397} y={299}>X ：</Bold>
      <Mono x={1430} y={299} size={9}>图详</Mono>
      <Bold x={1397} y={313}>Y ：</Bold>
      <Mono x={1430} y={312} size={9}>图详</Mono>
      <Bold x={1397} y={326}>Z ：</Bold>
      <Mono x={1430} y={326} size={9}>顶部</Mono>

      {/* side view */}
      <path d="M1046.500 270V330" stroke="#1030c8" strokeWidth="1.500" />
      <Arrow d="M1046.500 287L1050 304H1043z" />
      <Label x={1052} y={282}>Z</Label>
      <path d="M1033 330H1046M1033 358H1051" stroke="#111" />
      <path d="M1046 330H1152" stroke="#e02828" strokeWidth="1.200" />
      <circle cx="1046.500" cy="330" r="3" fill="#111" />
      <Arrow d="M1073 326.500L1088 330L1073 333.500z" />
      <Arrow d="M1130 326.500L1149 330L1130 333.500z" fill="#ee3a30" />
      <Label x={1048} y={330}>Y</Label>
      <Label x={1056} y={330} fill="#2aa03a">M</Label>
      <Label x={1087} y={325}>X</Label>
      <Label x={1136} y={325} fill="#e03030">XM</Label>
      <path d="M1051.500 331H1185V358H1051.500zM1056 331V358M1180 331V358M1099 333H1132V336H1099zM1103 336H1113V347H1103zM1121 331H1128V336H1121z" fill="none" stroke="#111" strokeWidth="1.100" />
      <Bold x={1011} y={334} size={8}>0.00</Bold>
      <Bold x={1003} y={362} size={8}>-16.00</Bold>

      {/* top view */}
      <path d="M1046.500 367V426" stroke="#1f8a2a" strokeWidth="1.500" />
      <Arrow d="M1046.500 382L1050 400H1043z" />
      <Label x={1052} y={379}>Y</Label>
      <path d="M1033 427H1046M1033 431H1051M1033 530H1051" stroke="#111" />
      <path d="M1046 426.500H1152" stroke="#e02828" strokeWidth="1.200" />
      <circle cx="1046.500" cy="426.500" r="3" fill="#111" />
      <Arrow d="M1073 423L1088 426.500L1073 430z" />
      <Arrow d="M1130 423L1149 426.500L1130 430z" fill="#ee3a30" />
      <Label x={1048} y={428}>Z</Label>
      <Label x={1056} y={428} fill="#2050e0">M</Label>
      <Label x={1087} y={422}>X</Label>
      <Label x={1136} y={422} fill="#e03030">XM</Label>
      <g fill="none" stroke="#111" strokeWidth="1.100">
        <path d="M1056 431H1180L1185 436V524L1180 529H1056L1051 524V436z" strokeWidth="1.300" />
        <path d="M1051 494H1097V453Q1097 446 1103 446Q1106 446 1109 450L1121 467V480M1125 494H1185" />
        <path d="M1099 529V488Q1100 479 1107 479H1113Q1118 479 1120 484L1132 510V529" />
        <path d="M1103 529V518Q1103 513 1108 513Q1113 513 1113 518V529" />
        <circle cx="1109" cy="484" r="2.500" />
        <circle cx="1117" cy="495" r="3" strokeWidth="2" />
        <circle cx="1110" cy="504" r="3" />
        <circle cx="1124" cy="512" r="2.500" />
        {[[1065, 446], [1171, 446], [1065, 515], [1171, 515]].map(([x, y]) => (
          <g key={`${x}-${y}`}>
            <circle cx={x} cy={y} r="9" />
            <circle cx={x} cy={y} r="6" />
          </g>
        ))}
        <circle cx="1065" cy="480" r="7" />
        <circle cx="1171" cy="480" r="7" />
      </g>
      <path d="M1046.500 431V543M1051 529V543M1185 529V543" stroke="#555" />
      <Bold x={1011} y={430} size={8}>0.00</Bold>
      <Bold x={1008} y={436} size={8}>-2.50</Bold>
      <Bold x={1003} y={534} size={8}>-57.50</Bold>
      <g transform="translate(1052 567) rotate(-90)"><Bold x={0} y={0} size={8}>0.00</Bold></g>
      <g transform="translate(1189 568) rotate(-90)"><Bold x={0} y={0} size={8}>77.50</Bold></g>

      {/* iso view */}
      <path d="M1337.500 367V426" stroke="#1030c8" strokeWidth="1.500" />
      <Arrow d="M1337.500 389L1341 404H1334z" />
      <Label x={1342} y={384}>Z</Label>
      <g fill="none" stroke="#111" strokeWidth="1.100">
        <path d="M1262.500 459L1287 447L1334 431L1415 476L1416 505L1346 528L1339 529L1262.500 485z" />
        <path d="M1262.500 459L1290 478M1305 490L1343 511L1415 478M1343 511V529M1337 507V526" />
        <path d="M1287 447L1312 463M1339 475L1368 495M1291 445L1318 461M1344 473L1372 491M1368 495L1340 508M1372 491L1344 505" />
        <path d="M1289 480L1350 452Q1358 449 1354 456L1345 464L1315 478M1289 480L1298 493L1303 488L1310 490L1340 474" />
        <circle cx="1317" cy="482" r="3" />
        <circle cx="1327" cy="478" r="2.500" />
        <ellipse cx="1280" cy="462" rx="9" ry="4" />
        <ellipse cx="1307" cy="448" rx="7" ry="3.500" />
        <ellipse cx="1334" cy="438" rx="9" ry="4" />
        <ellipse cx="1396" cy="475" rx="9" ry="4" />
        <ellipse cx="1371" cy="486" rx="7" ry="3.500" />
        <ellipse cx="1343" cy="499" rx="9" ry="4" />
      </g>
      <path d="M1337.500 426L1420 397" stroke="#2a9a38" strokeWidth="1.500" />
      <Arrow d="M1357 420L1373 414L1360 414z" />
      <Arrow d="M1402 402L1420 397L1404 395z" fill="#2a9a38" />
      <Label x={1367} y={409}>Y</Label>
      <Label x={1402} y={393} fill="#2aa03a" size={14}>YM</Label>
      <path d="M1337.500 426L1402 463" stroke="#e02828" strokeWidth="1.500" />
      <Arrow d="M1351 433L1358 440L1349 437z" />
      <Arrow d="M1388 452L1402 463L1387 457z" fill="#ee3a30" />
      <Label x={1361} y={457}>X</Label>
      <Label x={1384} y={478} fill="#e03030" size={14}>XM</Label>

      {/* table */}
      <path d="M968 594.500H1471" stroke="#111" strokeWidth="2" />
      <path d="M968 612H1471" stroke="#111" strokeWidth="1.500" />
      {rowLines.map((y, i) => (
        <path key={y} d={`M968 ${y}H1471`} stroke="#111" strokeWidth={i >= 4 && i <= 8 ? 1.800 : 1.400} />
      ))}
      {sheetCols.map((x) => (
        <path key={x} d={`M${x} 594V791`} stroke="#111" strokeWidth="1.300" />
      ))}
      {sheetHead.map(([t, x]) => (
        <Bold key={t} x={x} y={606} size={10} anchor="middle">{t}</Bold>
      ))}
      {sheetRows.map((r, i) => {
        const y = 623.500 + i * 14.850;
        return (
          <g key={r[0]}>
            <Mono x={1017} y={y} size={11} anchor="middle">{r[0]}</Mono>
            <Mono x={1115} y={y} anchor="middle">{r[1]}</Mono>
            <Mono x={1162} y={y} size={9} anchor="middle">0</Mono>
            <Mono x={1207} y={y} size={10} anchor="middle">{r[2]}</Mono>
            <Mono x={1256} y={y} size={9} anchor="middle">{r[3]}</Mono>
            <Mono x={1353} y={y} size={10} anchor="middle">{r[4]}</Mono>
            <Mono x={1397} y={y} size={10} anchor="middle">{r[5]}</Mono>
            <Mono x={1443} y={y} size={9} anchor="middle">{r[6]}</Mono>
          </g>
        );
      })}
      <Bold x={1361} y={801} size={9.500}>总时间:</Bold>
      <Mono x={1392} y={803} size={12}>93.1</Mono>
      <Bold x={1432} y={801} size={9.500}>分钟</Bold>
      <path d="M1161 607C1168 608 1173 613 1177 623C1178 640 1178 660 1177 680C1176 695 1175 705 1174 713C1172 730 1170 742 1168 753C1165 770 1166 785 1164 793C1162 797 1157 798 1155 797C1153 795 1153 792 1152 790C1150 775 1149 760 1148 747C1148 730 1150 712 1151 697C1152 685 1154 670 1155 657C1157 645 1160 640 1161 630C1159 625 1155 622 1154 617C1153 612 1156 608 1161 607z" fill="none" stroke="#f02414" strokeWidth="2.600" />
      <text x="1104" y="881" fontSize="20.800" fill="#ee3524">刀具号全是0</text>
      {/* footer */}
      <Bold x={966} y={984} size={9}>文件路径:</Bold>
      <Mono x={1012} y={983} size={11.500}>E:\UGGZTD\2021北京\3\031001 2103030 工装2\031001.prt</Mono>
      <text x="567" y="987" fontSize="11" fill="#222">"CNC-B11"</text>
    </svg>
  );
}

function Watermark() {
  return (
    <div className="absolute left-[1602px] top-[893px] flex">
      <svg width="72" height="83" viewBox="0 0 72 83" className="shrink-0">
        <path d="M35.500 0L71 20L40 27L22 8z" fill="#c0dae9" />
        <path d="M71 20V45L55 48L49 28z" fill="#7ec3e4" />
        <path d="M71 45V62L50 72L40 55L55 48z" fill="#62b0d8" />
        <path d="M50 72L35.500 82L16 71L18 53L38 60z" fill="#68bce3" />
        <path d="M16 71L0 62V36L18 53z" fill="#8fc6e2" />
        <path d="M0 36V20L14 12L22 8L30 22L8 36z" fill="#a5cfe5" />
        <path d="M35.500 14L55 25V58L35.500 69L18 58V25z" fill="#cccccc" />
        <path d="M35.500 23L51 32L35.500 41L20 32z" fill="#a9d3e8" />
        <path d="M20 32L35.500 41V59L20 50z" fill="#8cc1e0" />
        <path d="M51 32L35.500 41V59L51 50z" fill="#67b1d9" />
      </svg>
      <div className="ml-[7px] flex flex-col">
        <div className="mt-[12px] h-[38px] leading-[38px] text-[42px] font-bold text-[#e6e6e6] whitespace-nowrap [font-family:'Liberation_Sans','Noto_Sans_CJK_SC',sans-serif]">3D世界网</div>
        <div className="mt-[8px] text-[11px] leading-[10px] font-bold tracking-[3.400px] text-[#e6e6e6] whitespace-nowrap [font-family:'Liberation_Sans',sans-serif]">WWW.3DSJW.COM</div>
      </div>
    </div>
  );
}

export default function App() {
  return (
    <div className="relative w-[1884px] h-[988px] overflow-hidden bg-white flex flex-col [font-family:'Noto_Sans','Noto_Sans_CJK_SC',sans-serif]">
      <div className="h-[6px] shrink-0 bg-white">
        <div className="ml-[301px] w-[15px] h-px bg-[#1a30c0]" />
      </div>
      <MenuBar />
      <Ribbon />
      <Toolbar />
      <div className="flex-1 min-h-0 flex">
        <div className="w-[556px] shrink-0 h-full bg-white">
          <Navigator />
        </div>
        <div className="flex-1 flex flex-col min-w-0 bg-white">
          <div className="h-[21px] shrink-0" />
          <div className="h-[3px] bg-[#5ba3bd] shrink-0" />
          <div className="flex-1 min-h-0 bg-[#cccccc] border-l border-[#666] overflow-hidden">
            <Sheet />
          </div>
        </div>
      </div>
      <Dialog />
      <Watermark />
    </div>
  );
}
